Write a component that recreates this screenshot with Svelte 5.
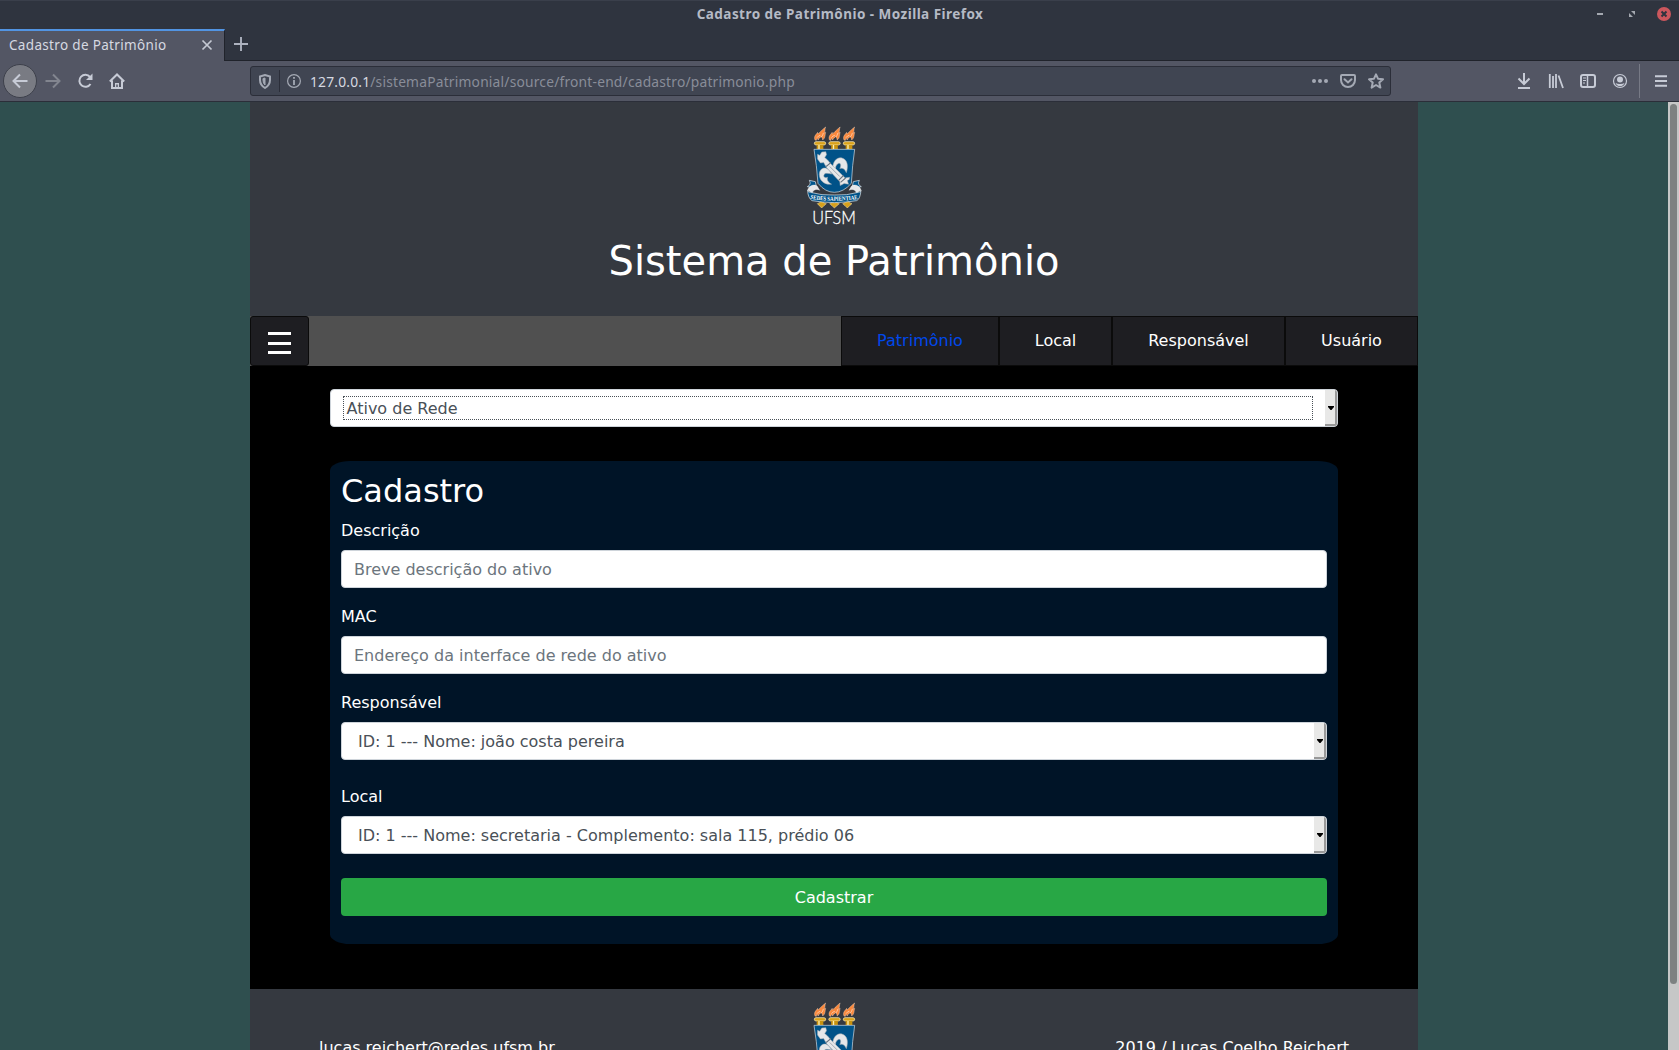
<script>
  const menu = [
    { label: 'Patrimônio', active: true, size: 'wide' },
    { label: 'Local', size: 'short' },
    { label: 'Responsável', size: 'long' },
    { label: 'Usuário', size: 'mid' }
  ];
  const torches = [120, 163.5, 207];
</script>

{#snippet crest()}
  <svg class="crest" viewBox="75 33 174 297" width="58" height="99">
    {#each torches as x}
      <g transform="translate({x} 0)">
        <path d="M-15 75C-20 64 -10 57 -7 52L-6 57C-1 53 3 47 17 36C13 44 17 48 12 54L17 52C14 63 17 68 8 75C8 69 5 67 3 65C0 70-5 69-5 75L-9 70L-11 76Z" fill="#f9883c" stroke="#fbd9c2" stroke-width="1.2" />
        <path d="M-9 68Q-4 61 1 61M4 66Q9 61 10 54" fill="none" stroke="#fff" stroke-width="1.500" />
        <rect x="-17" y="80" width="34" height="10" rx="5" fill="#d9a21b" stroke="#fff3c4" stroke-width="2" />
        <rect x="-10" y="90" width="20" height="12" fill="#c8920f" />
        <path d="M-3 90V102" stroke="#fff0b0" stroke-width="4" />
      </g>
    {/each}
    <g fill="#d6a01c" stroke="#fff0b8" stroke-width="1.4">
      <path d="M124 256L131 263L139 266L132 272L125 279L118 272L112 266L119 263Z" />
      <path d="M163 256L170 263L178 266L171 272L163 279L156 272L149 266L156 263Z" />
      <path d="M202 256L209 263L216 266L209 272L202 279L195 272L188 266L195 263Z" />
    </g>
    <path d="M102 103H224Q217 150 214 205Q190 232 163 232Q136 232 114 205Q110 150 102 103Z" fill="#005288" stroke="#d7e3ec" stroke-width="2" />
    <g fill="#e6e7e9" stroke="#a6abb1" stroke-width="1.5" transform="translate(159 161) scale(1.08) translate(-157 -160)">
      <path d="M157 163C154 143 166 128 180 130C196 133 201 151 194 171C190 161 183 157 176 160C181 149 177 143 171 146C165 149 163 156 164 169Z" />
      <path d="M146 164C134 152 119 160 119 176C119 194 135 206 153 203C144 198 139 192 142 184C133 187 130 182 132 177C135 171 143 173 154 175Z" />
      <path d="M114 120L120 123L126 114L137 113L139 121L134 129L142 136L152 148L191 186L203 184L202 190L197 193L200 203L188 201L177 207L176 196L139 157L131 143L122 144L114 133Z" />
      <path d="M138 154L151 143M172 193L186 179M178 198L192 186" stroke="#69737e" stroke-width="3" />
      <path d="M148 154L176 182" stroke="#8b929a" stroke-width="2" />
    </g>
    <path d="M88 196L106 200L110 219L82 215Q95 209 88 196ZM238 196L220 200L216 219L244 215Q231 209 238 196Z" fill="#00558c" stroke="#e8edf1" stroke-width="2" />
    <path d="M83 225C87 211 104 206 112 214L119 226C112 221 98 223 97 235ZM243 225C239 211 222 206 214 214L207 226C214 221 228 223 229 235Z" fill="#e6e7e9" stroke="#fff" />
    <path d="M83 225Q84 233 91 232Q125 242 163 240Q201 242 235 232Q242 233 243 225Q241 252 230 257Q198 262 163 263Q125 262 96 257Q83 248 83 225Z" fill="#005288" stroke="#e9eef2" stroke-width="2" />
    <path id="motto" d="M91 251Q127 258 163 257Q200 258 236 251" fill="none" />
    <text class="motto"><textPath href="#motto" textLength="143" lengthAdjust="spacingAndGlyphs">SEDES SAPIENTIAE</textPath></text>
    <text class="acronym" x="162" y="326" text-anchor="middle" textLength="131" lengthAdjust="spacingAndGlyphs">UFSM</text>
  </svg>
{/snippet}

{#snippet picker(text, focused)}
  <div class="control picker" class:focused>
    <span class="value">{text}</span>
    <span class="arrow"><svg width="6" height="4" viewBox="0 0 6 4"><path d="M0 0H6V1L3.500 4H2.500L0 1Z" fill="#000" /></svg></span>
  </div>
{/snippet}

<div class="window">
  <div class="titlebar">
    <span></span>
    <span class="wtitle">Cadastro de Patrimônio - Mozilla Firefox</span>
    <svg class="wbuttons" width="86" height="16" viewBox="0 0 86 16">
      <path d="M4 8H10" stroke="#a4a8b0" stroke-width="2" />
      <path d="M38 5H42V9ZM36 7V11H40Z" fill="#a4a8b0" />
      <circle cx="71" cy="8" r="7" fill="#cc575d" />
      <path d="M68.5 5.5L73.500 10.500M73.500 5.500L68.500 10.500" stroke="#2f343f" stroke-width="2" />
    </svg>
  </div>

  <div class="tabs">
    <div class="tab">
      <span class="tabname">Cadastro de Patrimônio</span>
      <svg width="12" height="12" viewBox="0 0 12 12"><path d="M1.500 1.500L10.500 10.500M10.500 1.500L1.500 10.500" stroke="#c5c9d3" stroke-width="1.7" /></svg>
    </div>
    <div class="newtab"><svg width="14" height="14" viewBox="0 0 14 14"><path d="M7 0V14M0 7H14" stroke="#adb2bf" stroke-width="1.900" /></svg></div>
  </div>

  <div class="toolbar">
    <div class="navicons">
      <span class="back"><svg width="16" height="16" viewBox="0 0 16 16"><path d="M15.500 8H1.500M8 1.500L1.500 8L8 14.500" /></svg></span>
      <svg class="dim" width="16" height="16" viewBox="0 0 16 16"><path d="M.5 8H14.500M8 1.500L14.500 8L8 14.500" /></svg>
      <svg width="16" height="16" viewBox="0 0 16 16"><path d="M13 4A6 6 0 1 0 13.500 11" /><path d="M15.500 .5V7H9Z" fill="#c7cbd6" stroke="none" /></svg>
      <svg width="16" height="16" viewBox="0 0 16 16"><path d="M.8 8.500L8 1.500L15.200 8.500M3 7.500V15H13V7.500" /><path d="M6 10H10V15H6Z" fill="#c7cbd6" stroke="none" /><path d="M8 11.500V14" stroke="#535664" stroke-width="1.500" /></svg>
    </div>
    <div class="urlbar">
      <svg class="soft" width="12" height="15" viewBox="0 0 12 15"><path d="M1 2.500L6 1L11 2.500V6Q11 11 6 14Q1 11 1 6Z" /><path d="M6 4V11Q4 9.500 4 6V4.500Z" fill="#a4a9b4" stroke-width="1" /></svg>
      <i class="split"></i>
      <svg class="soft thin" width="14" height="14" viewBox="0 0 14 14"><circle cx="7" cy="7" r="6.400" /><path d="M7 6V11M7 3V4.800" stroke-width="1.800" /></svg>
      <span class="url"><b>127.0.0.1</b>/sistemaPatrimonial/source/front-end/cadastro/patrimonio.php</span>
      <svg class="soft" width="16" height="16" viewBox="0 0 16 16"><g fill="#a4a9b4" stroke="none"><circle cx="2" cy="8" r="2" /><circle cx="8" cy="8" r="2" /><circle cx="14" cy="8" r="2" /></g></svg>
      <svg class="soft" width="16" height="16" viewBox="0 0 16 16"><path d="M2 2H14Q15 2 15 3V7A7 7 0 0 1 1 7V3Q1 2 2 2Z" /><path d="M4.500 6.200L8 9.500L11.500 6.200" stroke-linecap="round" /></svg>
      <svg class="soft" width="16" height="16" viewBox="0 0 16 16"><path d="M8 1.300L10 5.700L15 6.300L11.300 9.600L12.400 14.600L8 12L3.600 14.600L4.700 9.600L1 6.300L6 5.700Z" stroke-linejoin="round" /></svg>
    </div>
    <div class="tools">
      <svg width="16" height="16" viewBox="0 0 16 16"><path d="M8 0V11M2.500 5.500L8 11L13.500 5.500M2 15H14" /></svg>
      <svg width="16" height="16" viewBox="0 0 16 16"><path d="M1.800 1V15M5 3V15M8 1V15M10.500 2.500L15 15" stroke-width="1.800" /></svg>
      <svg width="16" height="16" viewBox="0 0 16 16"><rect x="1" y="2" width="14" height="12" rx="2" /><path d="M7.500 2V14" stroke-width="1.500" /><path d="M3 5H6M3 7.500H6M3 10H5" stroke-width="1" /></svg>
      <svg width="16" height="16" viewBox="0 0 16 16"><circle cx="8" cy="8" r="6.500" stroke-width="1.200" /><circle cx="8" cy="6.500" r="3" fill="#c7cbd6" stroke="none" /><path d="M3.500 10Q5 11 8 11Q11 11 12.500 10Q11.500 13 8 13.300Q4.500 13 3.500 10Z" fill="#c7cbd6" stroke="none" /></svg>
      <i class="bar"></i>
      <svg width="12" height="16" viewBox="0 0 12 16"><path d="M0 3.200H12M0 8H12M0 12.800H12" /></svg>
    </div>
  </div>

  <div class="viewport">
    <div class="page">
      <header>
        {@render crest()}
        <h1>Sistema de Patrimônio</h1>
      </header>
      <nav>
        <button class="burger" aria-label="Menu"><i></i><i></i><i></i></button>
        <div class="menu">
          {#each menu as item}
            <a class={item.size} class:active={item.active} href="#top">{item.label}</a>
          {/each}
        </div>
      </nav>
      <main>
        {@render picker('Ativo de Rede', true)}
        <form>
          <h2>Cadastro</h2>
          <div class="group">
            <label for="desc">Descrição</label>
            <input id="desc" class="control" placeholder="Breve descrição do ativo" />
          </div>
          <div class="group">
            <label for="mac">MAC</label>
            <input id="mac" class="control" placeholder="Endereço da interface de rede do ativo" />
          </div>
          <div class="group roomy">
            <span class="label">Responsável</span>
            {@render picker('ID: 1 --- Nome: joão costa pereira', false)}
          </div>
          <div class="group roomy">
            <span class="label">Local</span>
            {@render picker('ID: 1 --- Nome: secretaria - Complemento: sala 115, prédio 06', false)}
          </div>
          <button class="submit" type="button">Cadastrar</button>
        </form>
      </main>
      <footer>
        <span class="mail">lucas.reichert@redes.ufsm.br</span>
        {@render crest()}
        <span class="author">2019 / Lucas Coelho Reichert</span>
      </footer>
    </div>
    <div class="scrollbar"><i></i></div>
  </div>
</div>

<style>
  :global(body) { overflow: hidden; }
  .window, .window * { box-sizing: border-box; }
  .window { width: 1679px; height: 1050px; overflow: hidden; display: flex; flex-direction: column; font-family: "DejaVu Sans", sans-serif; font-size: 16px; line-height: 24px; background: #2f343f; }
  svg { display: block; flex: none; }
  i { display: block; }

  .titlebar { height: 28px; display: grid; grid-template-columns: 1fr auto 1fr; align-items: center; border-top: 1px solid #3a3f4b; padding-bottom: 2px; color: #b5bac5; }
  .wtitle { font: bold 13.500px/24px "Noto Sans", sans-serif; letter-spacing: .46px; padding: 1px 0 0 1px; white-space: nowrap; }
  .wbuttons { justify-self: end; }
  .tabs { height: 33px; display: flex; border-bottom: 1px solid #20232b; }
  .tab { width: 225px; height: 32px; margin-top: 1px; display: flex; align-items: center; justify-content: space-between; padding: 0 11px 3px 9px; background: #535664; border-top: 2px solid #5294e2; border-right: 1px solid #20232b; margin-bottom: -1px; position: relative; }
  .tabname { color: #d6d9e1; font: 13.500px/24px "Noto Sans", sans-serif; letter-spacing: .33px; white-space: nowrap; }
  .newtab { display: flex; align-items: center; padding: 0 9px; }

  .toolbar { height: 41px; display: flex; align-items: center; background: #535664; border-bottom: 1px solid #2b2e39; }
  .toolbar svg { fill: none; stroke: #c7cbd6; stroke-width: 2; }
  .toolbar .dim { stroke: #82858f; }
  .toolbar .soft { stroke: #a4a9b4; }
  .toolbar .thin { stroke-width: 1.200; }
  .navicons { width: 250px; display: flex; align-items: center; gap: 16px; padding-left: 3px; }
  .back { width: 34px; height: 34px; border-radius: 50%; background: #797b83; border: 1px solid #3d404b; display: grid; place-items: center; margin-right: -8px; }
  .urlbar { width: 1141px; height: 30px; display: flex; align-items: center; border: 1px solid #2b2e39; border-radius: 3px; background: #404552; padding: 0 6px 0 8px; gap: 12px; }
  .split { width: 1px; height: 22px; background: #2b2e39; margin: 0 -5px 0 -4px; }
  .url { flex: 1; color: #898d99; font: 13.800px/28px "Noto Sans", sans-serif; letter-spacing: .2px; margin-left: -3px; padding-top: 1px; white-space: nowrap; }
  .url b { font-weight: 400; color: #d6d9e1; }
  .tools { flex: 1; display: flex; align-items: center; justify-content: flex-end; gap: 16px; padding-right: 12px; }
  .bar { width: 1px; height: 34px; background: #777a86; margin: 0 -1px 0 -5px; }

  .viewport { flex: 1; min-height: 0; display: flex; background: #2f4f4f; overflow: hidden; }
  .page { width: 1168px; margin-left: 250px; background: #000; }
  .scrollbar { width: 11px; margin-left: auto; background: #c6c7c7; padding: 2px; }
  .scrollbar i { width: 7px; height: 880px; border-radius: 4px; background: #7d8181; }

  header { height: 214px; background: #353940; display: flex; flex-direction: column; align-items: center; padding-top: 24px; color: #fff; }
  .crest { overflow: visible; }
  h1 { margin: 12px 0 0; font-size: 40px; line-height: 48px; font-weight: 400; }
  .motto { font: bold 18px "Liberation Serif", serif; fill: #fff; }
  .acronym { font: 300 50px Lato, sans-serif; fill: #fff; stroke: #fff; stroke-width: .8; }

  nav { height: 50px; background: #505050; display: flex; justify-content: space-between; }
  .burger { width: 59px; height: 50px; border: 1px solid #0b0b0b; border-radius: 3px; background: #1e1e22; display: flex; flex-direction: column; align-items: center; gap: 6.500px; padding: 15px 0 0; }
  .burger i { width: 23px; height: 3px; background: #fff; }
  .menu { display: flex; }
  .menu a { border: 1px solid #0b0b0b; background: #1e1e22; color: #fff; text-decoration: none; text-align: center; line-height: 48px; }
  .menu .active { color: #0048ea; }
  .wide { width: 158px; }
  .short { width: 113px; }
  .long { width: 173px; }
  .mid { width: 133px; }

  main { height: 623px; padding: 23px 80px 0; }
  .control { display: block; width: 100%; height: 38px; border: 1px solid #ced4da; border-radius: 4px; background: #fff; padding: 0 12px; font: 16px/24px "DejaVu Sans", sans-serif; color: #495057; }
  .control::placeholder { color: #6c757d; opacity: 1; }
  .picker { display: flex; align-items: stretch; justify-content: space-between; padding: 0; overflow: hidden; }
  .value { padding: 7px 16px 5px; white-space: nowrap; }
  .focused .value { flex: 1; margin: 6px 12px 6px 12px; padding: 1px 3px 0 2.500px; line-height: 22px; border: 1px dotted #495057; }
  .arrow { width: 12px; background: #e8e8e7; border-right: 2px solid #999; border-bottom: 2px solid #999; padding: 1px 1px 0 0; display: grid; align-items: center; justify-items: end; }
  form { height: 483px; margin-top: 34px; padding: 10px 11px 0; border-radius: 2%; background: #001427; color: #fff; }
  h2 { margin: 0 0 8px; font-size: 32px; line-height: 40px; font-weight: 400; }
  .group { margin-bottom: 17px; }
  .roomy { margin-bottom: 25px; }
  .roomy:nth-of-type(4) { margin-bottom: 24px; }
  label, .label { display: block; margin-bottom: 7px; }
  .submit { display: block; width: 100%; height: 38px; border: 0; border-radius: 4px; background: #28a745; color: #fff; padding: 2px 0 0; font: 16px/24px "DejaVu Sans", sans-serif; }

  footer { height: 160px; background: #353940; color: #fff; display: grid; grid-template-columns: 1fr auto 1fr; padding: 13px 69px 0; }
  .mail, .author { padding-top: 34px; }
  .author { text-align: right; }
</style>
